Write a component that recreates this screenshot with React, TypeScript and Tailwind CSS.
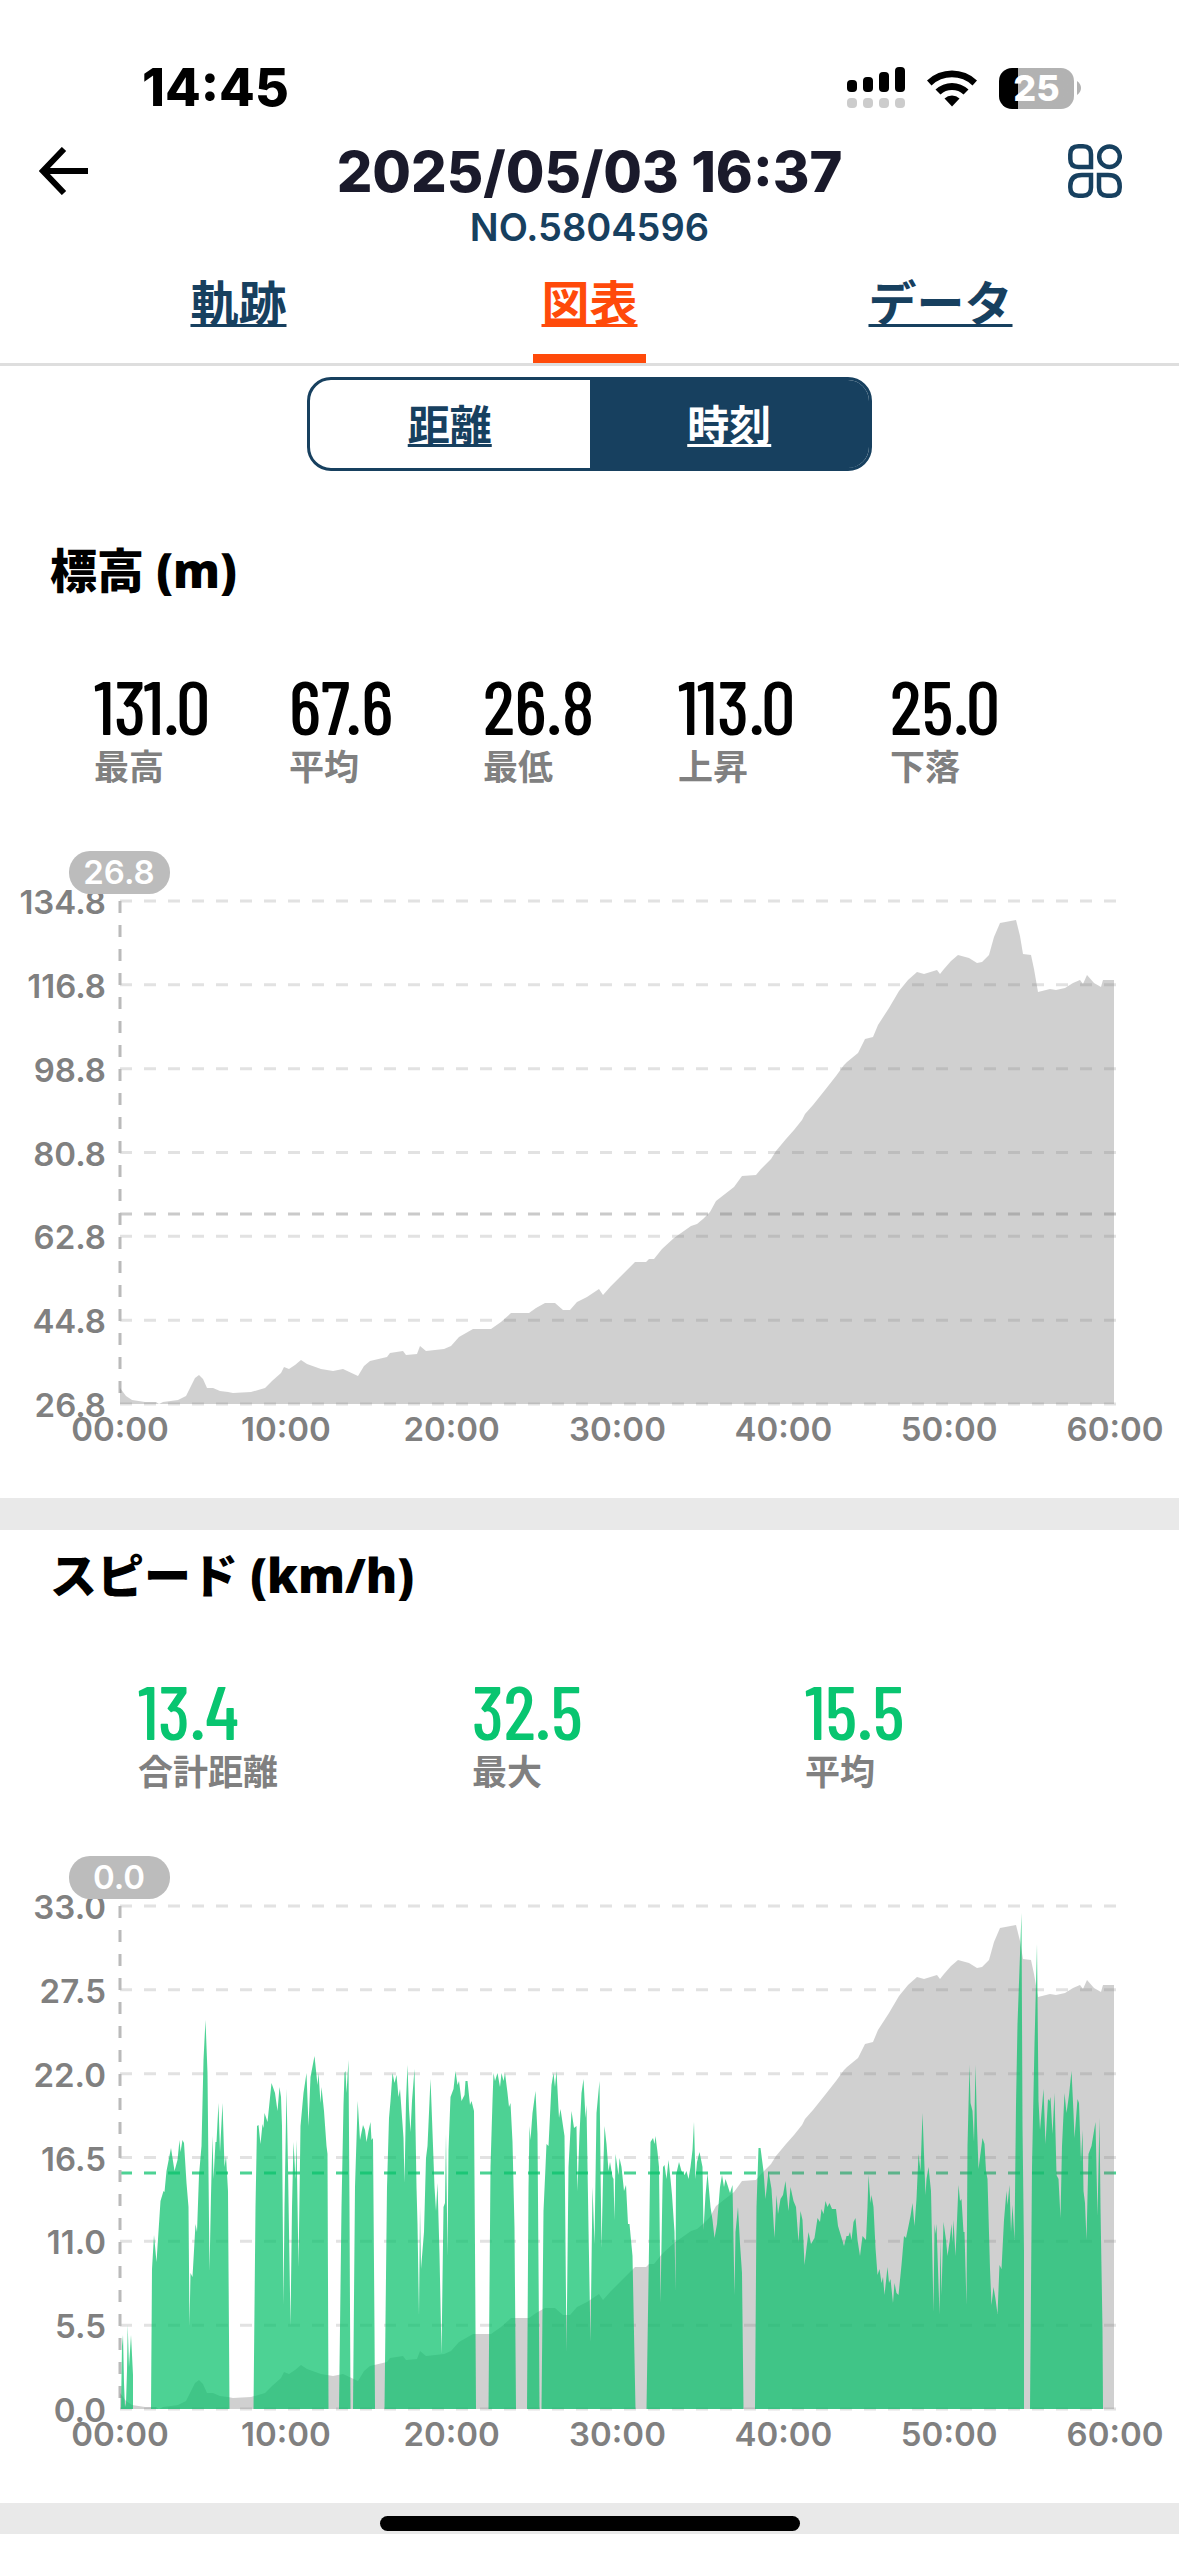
import { useState } from "react";
import type { ReactNode } from "react";

const TABS = ["軌跡", "図表", "データ"];

// Plot area inside the chart viewBox
const LEFT = 120;
const RIGHT = 1115;
const TOP = 61;
const BOTTOM = 564;

const TIMES = ["00:00", "10:00", "20:00", "30:00", "40:00", "50:00", "60:00"];

const ELEVATION =
  "120,564 120,548 126,556 132,560 145,562 156,562 159,564 163,562 178,560 186,556 191,546 195,538 199,535 203,539 207,548 213,548 220,551 228,552 233,553 251,552 265,548 272,541 281,533 284,527 289,529 295,525 301,520 307,524 321,529 333,531 343,529 358,536 364,526 370,521 387,517 390,513 403,511 406,515 417,514 420,506 426,511 444,509 451,506 459,497 473,489 491,489 501,482 511,473 529,473 536,468 545,463 555,463 563,470 570,470 577,462 587,457 599,449 603,455 611,446 620,437 635,422 646,422 649,419 654,419 662,409 674,398 691,386 697,384 703,379 710,372 716,361 734,347 742,336 756,335 761,329 771,319 776,311 786,299 794,290 802,280 805,274 813,265 825,250 836,236 844,225 847,222 858,213 865,199 873,197 878,185 889,168 899,151 908,140 917,132 924,134 937,130 940,134 944,129 951,121 958,115 969,118 977,123 982,122 989,115 994,97 1000,83 1016,80 1020,96 1023,114 1031,115 1034,129 1038,152 1050,149 1056,150 1065,148 1073,143 1080,140 1083,144 1087,135 1094,143 1101,147 1103,140 1114,140 1114,564";

// One polygon per moving stretch, the gaps are stops
const SPEED = [
  "121,564 122,501 123,490 124,538 125,562 126,558 127,526 127.7,480 129,522 131,490 133,530 133,564",
  "151,564 152,424 154,390 156.5,417 160.5,356 163.5,346 164.5,347 166.5,326 171,303 174.5,326 177.5,315 179.5,295 180.5,307 182.5,295 184,298 186.5,338 188.5,362 189.5,481 190.5,428 192.5,432 195.5,379 197,387 199,330 201.5,301 203.5,215 205.5,175 207.5,228 209.5,426 211,350 212.5,291 213.5,334 215.5,297 216.5,297 218.5,258 220,307 222.5,258 224.5,322 226,311 228,346 229.5,564",
  "253.5,564 255.5,362 257,281 258.5,280 260.5,299 262.5,279 263.5,283 264.5,268 267.5,277 271.5,238 275,248 277.5,266 279.5,242 281,252 282,281 283.5,460 284.5,362 286.5,244 288,322 290.5,481 292,362 293.5,297 295.5,334 296.5,295 298.5,422 300.5,281 303.5,248 306.5,228 308.5,281 310.5,232 314.5,211 317.5,240 318.5,228 320.5,258 321.5,242 324,266 326.5,301 327.5,309 328.5,564",
  "339,564 341.5,362 343.5,260 344.5,228 345.5,226 346.5,248 348.5,215 349.5,362 350.5,564",
  "353,564 355,342 357.7,256 360,295 363,280 365,285 366.5,297 368.5,286 370.5,277 371.5,295 373,293 374.5,485 375,564",
  "384.5,564 387,342 389,273 390.5,256 392.5,228 394.5,238 396.5,230 398.5,252 400,244 403.5,293 404.5,338 406,256 407.5,220 409,264 410.5,287 412,256 414.5,224 416.5,342 417.5,379 419,470 420,362 421,424 424,387 426,313 427.5,301 430.5,234 431.5,260 434.5,342 436,366 437.5,338 439.5,409 441.5,509 443.5,362 445,358 446,289 447.5,411 448.5,305 450.5,252 453.5,244 455.5,226 457.5,240 459,236 461.5,256 464.5,250 465.5,236 467.5,236 470,260 471.5,256 474,266 475,403 476,564",
  "488.5,564 490.5,322 492.5,256 493.5,228 495,236 497.5,228 500,242 501.5,228 503.5,236 505,228 507.5,248 509,262 510.5,258 512.5,297 514.5,383 516,564",
  "527,564 528.5,342 529.5,281 530.5,295 532.5,268 535.5,246 537.5,289 539,485 539.5,564",
  "541.5,564 543.5,366 545.5,322 546.5,299 548.5,301 551.5,240 553.5,228 555,242 556.5,226 559,273 560.5,264 564.5,291 566.5,507 568.5,322 571.5,266 574,283 576.5,281 577.5,346 579.5,289 581.5,248 583.5,234 585.5,273 586.5,260 588.5,383 590.5,497 592.5,342 594.5,399 596.5,268 599.5,236 601.5,403 603,334 604.5,281 606.5,299 608.5,326 610,317 612.5,332 613.5,334 614.5,375 615.5,309 618.5,330 619.5,313 621.5,322 624,346 626,340 628,379 629.5,379 632.5,411 635.5,564",
  "646.5,564 649,403 650.5,297 653,293 654.5,299 655.5,291 657.5,307 659,322 660.5,458 662.5,342 663,322 664.5,320 666.5,334 668.5,315 670.5,334 672,350 674.5,387 675.5,446 676,330 679,317 681.5,326 684.5,330 686.5,326 688.5,334 690.5,322 692.5,305 694,277 695.5,334 697,317 699.5,307 702.5,322 703.5,385 705.5,350 707.5,328 710.5,362 712.5,375 714.5,393 717,379 720,342 722,330 724,342 725.5,334 727.5,340 730,348 732.5,340 734.5,450 735.5,387 738,362 740,399 742,428 743.5,564",
  "755,564 756.5,362 758.5,303 760.5,303 763.5,326 765.5,354 768.5,326 771.5,344 774.5,393 776.5,350 778,369 780.5,354 783,350 785.5,336 788.5,366 790.5,342 793.5,356 796,362 798.5,397 800.5,366 802.5,375 804.5,420 806.5,403 808.5,387 811,399 814.5,393 817.5,373 820,377 821.5,364 823.5,369 825.5,356 827.5,362 829.5,358 832,364 836,364 838,381 841,391 844,401 846.5,391 848.5,391 850,387 851.5,395 853.5,377 855.5,373 857.5,395 860,411 862.5,391 866,395 867.5,362 868.5,330 870.5,358 871.5,350 873.5,362 875.5,403 877.5,430 879.5,424 881.5,438 883,432 884.5,450 887.5,422 889,438 890.5,434 893,458 894.5,438 896.5,448 898.5,450 901.5,420 904,391 906,393 908.5,381 910.5,371 912.5,358 914.5,381 916.5,354 918.5,309 920.5,326 922.5,268 925.5,350 926.5,334 928.5,322 931,346 933.5,467 934.5,379 935.5,389 936.5,379 939.5,469 940.5,395 941.5,450 943.5,377 946,395 947.5,411 949.5,397 951.5,379 952.5,397 953.5,375 955.5,411 958.5,340 960,356 961.5,354 963.5,387 964.5,387 966.5,460 967.5,301 969.5,220 970.5,258 972.5,266 974,297 975.5,220 977,281 978.5,324 982.5,293 984.5,299 986,326 987.5,334 990,424 991.5,460 993.5,442 995.5,454 997.5,469 999.5,420 1001.5,424 1004,375 1006.5,346 1007.5,360 1009.5,340 1011,387 1012.5,360 1014.5,395 1016,260 1017.5,179 1021.5,68 1022.5,281 1024,407 1024,564",
  "1030,564 1032,322 1034.5,199 1037,99 1038.5,256 1040,285 1043.5,244 1045.5,299 1048,254 1049.5,256 1050.5,252 1052.5,289 1054.5,248 1056.5,330 1058.5,334 1060.5,373 1062,301 1064.5,248 1066.5,268 1069,250 1071.5,226 1073.5,268 1074.5,293 1077.5,254 1079,258 1081,317 1082.5,285 1083.5,346 1085,358 1086.5,395 1088.5,309 1091.5,301 1095.5,277 1097.5,371 1099.5,273 1100.5,362 1102.5,485 1103,564",
];

type Stat = { value: string; label: string };

const ELEVATION_STATS: Stat[] = [
  { value: "131.0", label: "最高" },
  { value: "67.6", label: "平均" },
  { value: "26.8", label: "最低" },
  { value: "113.0", label: "上昇" },
  { value: "25.0", label: "下落" },
];

const SPEED_STATS: Stat[] = [
  { value: "13.4", label: "合計距離" },
  { value: "32.5", label: "最大" },
  { value: "15.5", label: "平均" },
];

function StatusBar() {
  return (
    <div className="flex h-[118px] items-end justify-between pr-[98px] pl-[142px] text-black">
      <span className="text-[52px] leading-[60px] font-extrabold">14:45</span>
      <div className="flex h-[60px] items-center gap-[22px]">
        <svg className="h-[42px] w-[58px]" viewBox="0 0 58 42">
          <rect x="0" y="13" width="10" height="12" rx="4" />
          <rect x="16" y="10" width="10" height="15" rx="4" />
          <rect x="32" y="5" width="10" height="20" rx="4" />
          <rect x="48" y="0" width="10" height="25" rx="4" />
          {[0, 16, 32, 48].map((x) => (
            <rect key={x} x={x} y="31" width="10" height="10" rx="4" fill="#cccccc" />
          ))}
        </svg>
        <svg className="h-[38px] w-[50px]" viewBox="0 0 50 38">
          <path d="M0 11.5 A36 36 0 0 1 50 11.5 L45.5 16.5 A29.5 29.5 0 0 0 4.5 16.5 Z" />
          <path d="M8.5 20.5 A24 24 0 0 1 41.5 20.5 L36.5 25.5 A17 17 0 0 0 13.5 25.5 Z" />
          <path d="M17.5 29.5 A11 11 0 0 1 32.5 29.5 L25 37.5 Z" />
        </svg>
        <div className="flex items-center gap-[3px]">
          <div className="flex h-[41px] w-[75px] items-center justify-center rounded-[13px] bg-linear-to-r from-black from-25% to-[#b2b2b2] to-25% text-[36px] font-extrabold text-white">
            25
          </div>
          <svg className="h-[14px] w-[4px]" viewBox="0 0 4 14">
            <path d="M0 0 Q4 3 4 7 Q4 11 0 14 Z" fill="#b2b2b2" />
          </svg>
        </div>
      </div>
    </div>
  );
}

function Header() {
  return (
    <header className="grid grid-cols-[1fr_auto_1fr] items-start pt-[21px]">
      <button aria-label="戻る" className="flex h-16 items-center pl-[39px]">
        <svg className="h-[48px] w-[49px]" viewBox="0 0 49 48" fill="none" stroke="#000" strokeWidth="6">
          <path d="M25 2 L4 24 L25 46 M4 24 H49" />
        </svg>
      </button>
      <div className="text-center">
        <h1 className="text-[56px] leading-[66px] font-extrabold text-[#1a1a2b]">2025/05/03 16:37</h1>
        <p className="text-[38px] leading-[44px] font-semibold text-[#17405f]">NO.5804596</p>
      </div>
      <button aria-label="メニュー" className="flex h-16 items-center justify-end pr-[57px]">
        <svg className="h-[54px] w-[54px]" viewBox="0 0 54 54" fill="none" stroke="#17405f" strokeWidth="4.5">
          <path d="M10.5 2.3 H15 Q23 2.3 23 10.5 V23 H10.5 Q2.3 23 2.3 15 V10.5 Q2.3 2.3 10.5 2.3 Z" />
          <circle cx="41.5" cy="12.7" r="10.3" />
          <path d="M14 31 H23 V43.5 Q23 51.7 15 51.7 H10.5 Q2.3 51.7 2.3 43.5 V42 Q2.3 31 14 31 Z" />
          <path d="M31 31 H40 Q51.7 31 51.7 42 V43.5 Q51.7 51.7 43.5 51.7 H39 Q31 51.7 31 43.5 Z" />
        </svg>
      </button>
    </header>
  );
}

function StatList({
  stats,
  color,
  columns,
}: {
  stats: Stat[];
  color: string;
  columns: string;
}) {
  return (
    <dl className={`grid pt-[50px] ${columns}`}>
      {stats.map((s) => (
        <div key={s.label} className="flex flex-col-reverse">
          <dt className="text-[35px] leading-[44px] font-bold text-[#808080]">{s.label}</dt>
          <dd
            className={`font-['Barlow_Condensed','Roboto_Condensed',sans-serif] text-[76px] leading-[80px] font-medium ${color}`}
          >
            {s.value}
          </dd>
        </div>
      ))}
    </dl>
  );
}

function Chart({
  label,
  ticks,
  marker,
  average,
  averageColor,
  children,
}: {
  label: string;
  ticks: string[];
  marker: string;
  average: number;
  averageColor: string;
  children?: ReactNode;
}) {
  const rowHeight = (BOTTOM - TOP) / (ticks.length - 1);
  const colWidth = (RIGHT - LEFT) / (TIMES.length - 1);
  return (
    <svg role="img" aria-label={label} viewBox="0 0 1179 620" className="mt-[51px] block w-full">
      <g strokeWidth="3" strokeDasharray="12 12">
        {ticks.map((t, i) => (
          <line
            key={t}
            x1={LEFT}
            x2={RIGHT + 1}
            y1={TOP + i * rowHeight}
            y2={TOP + i * rowHeight}
            stroke="#e2e2e2"
          />
        ))}
        <line x1={LEFT} x2={RIGHT + 1} y1={average} y2={average} stroke={averageColor} />
        <line x1={LEFT} x2={LEFT} y1={TOP} y2={BOTTOM} stroke="#bababa" />
      </g>
      <polygon points={ELEVATION} fill="#7a7a7a" fillOpacity="0.355" />
      {children}
      <g fill="#808080" fontSize="33" fontWeight="600">
        {ticks.map((t, i) => (
          <text key={t} x="106" y={TOP + i * rowHeight + 13} textAnchor="end">
            {t}
          </text>
        ))}
        {TIMES.map((t, i) => (
          <text key={t} x={LEFT + i * colWidth} y="601" textAnchor="middle">
            {t}
          </text>
        ))}
      </g>
      <rect x="69" y="11" width="101" height="43" rx="21" fill="#bcbcbc" />
      <text x="119" y="44" textAnchor="middle" fill="#fff" fontSize="33" fontWeight="600">
        {marker}
      </text>
    </svg>
  );
}

export default function App() {
  const [tab, setTab] = useState("図表");
  const [axis, setAxis] = useState("時刻");

  return (
    <div className="min-h-screen bg-white font-['Inter','Noto_Sans_CJK_JP',sans-serif]">
      <StatusBar />
      <Header />

      <nav className="mt-[15px] grid grid-cols-3 border-b-3 border-[#dedede] px-[63px]">
        {TABS.map((t) => (
          <a
            key={t}
            href={`#${t}`}
            onClick={() => setTab(t)}
            className={`flex h-[99px] flex-col items-center justify-between text-[48px] leading-[80px] font-bold underline decoration-[3px] underline-offset-[3px] ${
              tab === t ? "text-[#ff4a0a]" : "text-[#17405f]"
            }`}
          >
            {t}
            <span className={`h-[9px] w-[113px] ${tab === t ? "bg-[#ff4a0a]" : ""}`} />
          </a>
        ))}
      </nav>

      <div className="mx-auto mt-[11px] flex h-[94px] w-[565px] overflow-hidden rounded-3xl border-3 border-[#17405f]">
        {["距離", "時刻"].map((a) => (
          <button
            key={a}
            onClick={() => setAxis(a)}
            className={`flex-1 pt-[2px] text-[42px] font-bold underline decoration-[3px] underline-offset-[3px] ${
              axis === a ? "bg-[#17405f] text-white" : "text-[#17405f]"
            }`}
          >
            {a}
          </button>
        ))}
      </div>

      <section className="mt-[54px] pb-[38px]">
        <h2 className="pl-[50px] font-['Noto_Sans','Noto_Sans_CJK_JP',sans-serif] text-[47px] leading-[90px] font-black">
          標高 (m)
        </h2>
        <StatList
          stats={ELEVATION_STATS}
          color="text-black"
          columns="grid-cols-[195fr_194fr_195fr_212fr_289fr] pl-[94px]"
        />
        <Chart
          label="標高"
          ticks={["134.8", "116.8", "98.8", "80.8", "62.8", "44.8", "26.8"]}
          marker="26.8"
          average={374}
          averageColor="#cacaca"
        />
      </section>

      <div className="h-8 bg-[#e9e9e9]" />

      <section className="pb-[38px]">
        <h2 className="pl-[50px] font-['Noto_Sans','Noto_Sans_CJK_JP',sans-serif] text-[47px] leading-[90px] font-black">
          スピード (km/h)
        </h2>
        <StatList
          stats={SPEED_STATS}
          color="text-[#08c570]"
          columns="grid-cols-[334fr_333fr_374fr] pl-[138px]"
        />
        <Chart
          label="スピード"
          ticks={["33.0", "27.5", "22.0", "16.5", "11.0", "5.5", "0.0"]}
          marker="0.0"
          average={328}
          averageColor="#4dd294"
        >
          <g fill="#08c16b" fillOpacity="0.72">
            {SPEED.map((points) => (
              <polygon key={points} points={points} />
            ))}
          </g>
        </Chart>
      </section>

      <div className="bg-[#e9e9e9] pt-[13px] pb-[3px]">
        <div className="mx-auto h-[15px] w-[420px] rounded-full bg-black" />
      </div>
    </div>
  );
}
